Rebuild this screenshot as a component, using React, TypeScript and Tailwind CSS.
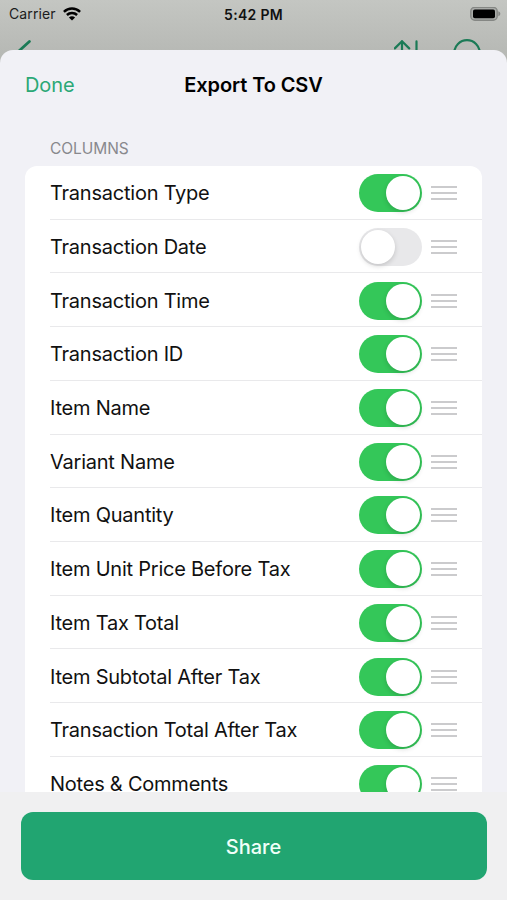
import { useState } from 'react';
import clsx from 'clsx';

const INITIAL_COLUMNS = [
  { name: 'Transaction Type', enabled: true },
  { name: 'Transaction Date', enabled: false },
  { name: 'Transaction Time', enabled: true },
  { name: 'Transaction ID', enabled: true },
  { name: 'Item Name', enabled: true },
  { name: 'Variant Name', enabled: true },
  { name: 'Item Quantity', enabled: true },
  { name: 'Item Unit Price Before Tax', enabled: true },
  { name: 'Item Tax Total', enabled: true },
  { name: 'Item Subtotal After Tax', enabled: true },
  { name: 'Transaction Total After Tax', enabled: true },
  { name: 'Notes & Comments', enabled: true },
];

function StatusBar() {
  return (
    <div className="grid h-7 grid-cols-3 items-center text-black">
      <div className="flex items-center gap-[7px] pl-[9px]">
        <span className="text-[14px] leading-none tracking-[0.1px] text-[#1c1c1c]">Carrier</span>
        <svg width="18" height="14" viewBox="0 0 18 14" fill="none" stroke="currentColor" strokeWidth="2.5">
          <path d="M0.9 4.8C5.5 0.4 12.5 0.4 17.1 4.8" />
          <path d="M3.9 8C6.8 5.2 11.2 5.2 14.1 8" />
          <path d="M9 13.6L5.9 10.5C7.6 8.9 10.4 8.9 12.1 10.5Z" fill="currentColor" stroke="none" />
        </svg>
      </div>
      <span className="pt-px text-center text-[14px] leading-none font-semibold tracking-[0.3px] text-[#111]">5:42 PM</span>
      <div className="flex justify-end pr-[6px]">
        <svg width="31" height="15" viewBox="0 0 31 15">
          <rect x="0.8" y="0.3" width="26.4" height="13" rx="4" fill="#a9aba8" stroke="#858784" strokeWidth="1.4" />
          <rect x="3" y="2.4" width="22" height="8.8" rx="1.8" fill="#000" />
          <path d="M28.3 4.3C31 5.1 31 8.5 28.3 9.3Z" fill="#858784" />
        </svg>
      </div>
    </div>
  );
}

// Toolbar of the screen behind the sheet, mostly covered by it
function BackgroundToolbar() {
  return (
    <div className="flex h-[22px] items-start justify-between overflow-hidden pr-[26px] pl-[18px] text-[#1b7a56]">
      <svg className="mt-[11px]" width="14" height="22" viewBox="0 0 14 22" fill="none" stroke="currentColor" strokeWidth="2.8" strokeLinecap="round">
        <path d="M11.4 2.5L2 11l9.4 9" />
      </svg>
      <div className="flex items-start gap-[31px]">
        <svg className="mt-[11px]" width="28" height="26" viewBox="0 0 28 26" fill="none" stroke="currentColor" strokeWidth="2.2" strokeLinecap="round" strokeLinejoin="round">
          <path d="M8 24V2.2M0.8 9.4L8 2.2l7.2 7.2M22.5 2.4v22M16 17l6.5 7 6.5-7" />
        </svg>
        <svg className="mt-[11px]" width="28" height="28" viewBox="0 0 28 28" fill="none" stroke="currentColor" strokeWidth="2.2">
          <circle cx="14" cy="14" r="12.8" />
        </svg>
      </div>
    </div>
  );
}

function Toggle({ on, label, onClick }: { on: boolean; label: string; onClick: () => void }) {
  return (
    <button
      type="button"
      role="switch"
      aria-checked={on}
      aria-label={label}
      onClick={onClick}
      className={clsx(
        'flex h-[38px] w-[62.5px] shrink-0 items-center rounded-full px-[2px] transition-colors',
        on ? 'justify-end bg-[#34c759]' : 'justify-start bg-[#e8e8ea]'
      )}
    >
      <span className="size-[34px] rounded-full bg-white shadow-[0_2px_5px_rgba(0,0,0,0.16)]" />
    </button>
  );
}

function DragHandle() {
  return (
    <div className="ml-[9px] flex w-[26.5px] shrink-0 flex-col gap-[4px]">
      <span className="h-[2px] bg-[#cbcbcd]" />
      <span className="h-[2px] bg-[#cbcbcd]" />
      <span className="h-[2px] bg-[#cbcbcd]" />
    </div>
  );
}

export default function App() {
  const [columns, setColumns] = useState(INITIAL_COLUMNS);

  const toggle = (name: string) =>
    setColumns((cols) => cols.map((c) => (c.name === name ? { ...c, enabled: !c.enabled } : c)));

  return (
    <div className="flex h-[900px] w-[507px] flex-col overflow-hidden bg-linear-to-b from-[#c4c6c2] from-0% to-[#b5b7b3] to-[60px] font-['Inter','Liberation_Sans',sans-serif]">
      <StatusBar />
      <BackgroundToolbar />

      <div className="flex min-h-0 flex-1 flex-col overflow-hidden rounded-t-[13px] bg-[#f1f1f6]">
        <header className="grid h-[69px] shrink-0 grid-cols-[1fr_auto_1fr] items-center px-[25px]">
          <button type="button" className="text-left text-[20px] tracking-[-0.1px] text-[#2ba876]">Done</button>
          <h1 className="text-[20px] font-semibold tracking-[-0.1px] text-black">Export To CSV</h1>
        </header>

        <div className="min-h-0 flex-1 overflow-hidden px-[25px] pt-[20px]">
          <h2 className="pl-[25px] text-[15.5px] leading-[20px] tracking-[-0.05px] text-[#88888d]">COLUMNS</h2>
          <ul className="mt-[7px] rounded-[12px] bg-white">
            {columns.map((col) => (
              <li key={col.name} className="flex h-[53.73px] pl-[25px]">
                <div className="flex flex-1 items-center border-b border-[#e9e9eb] pt-[1.5px] pr-[25px]">
                  <span className="flex-1 text-[20px] tracking-[-0.23px] whitespace-nowrap text-[#111]">{col.name}</span>
                  <Toggle on={col.enabled} label={col.name} onClick={() => toggle(col.name)} />
                  <DragHandle />
                </div>
              </li>
            ))}
          </ul>
        </div>

        <footer className="h-[108px] shrink-0 bg-[#f0f0f1] px-[20.5px] pt-[20px]">
          <button type="button" className="h-[68px] w-full rounded-[12px] bg-[#21a571] pt-px text-[20px] font-medium text-[#effff8]">
            Share
          </button>
        </footer>
      </div>
    </div>
  );
}
